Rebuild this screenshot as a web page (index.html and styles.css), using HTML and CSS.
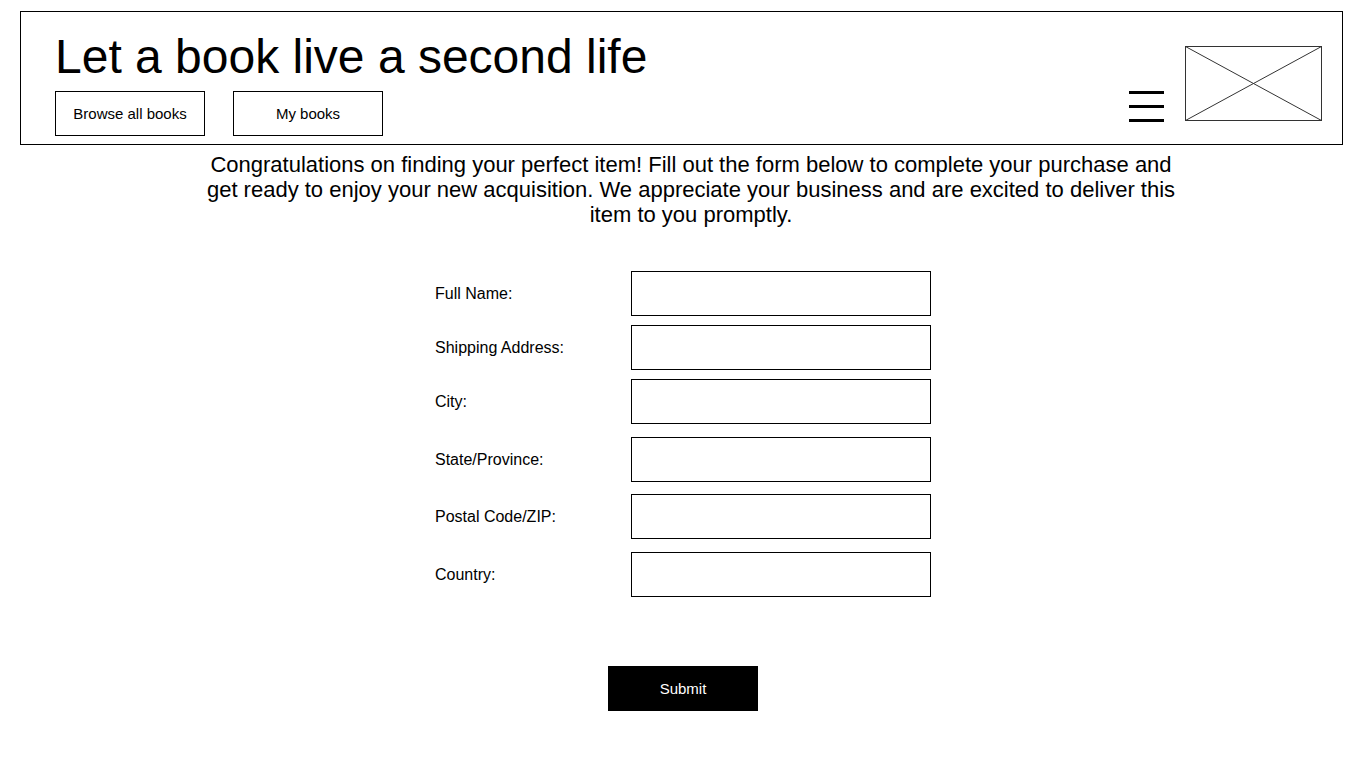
FILE: index.html
```html
<!DOCTYPE html>
<html lang="en">
<head>
<meta charset="utf-8">
<title>Let a book live a second life</title>
<link rel="stylesheet" href="styles.css">
</head>
<body>
<header class="header">
  <div class="header-left">
    <h1 class="title">Let a book live a second life</h1>
    <nav class="nav">
      <a class="nav-btn" href="#">Browse all books</a>
      <a class="nav-btn" href="#">My books</a>
    </nav>
  </div>
  <div class="header-right">
    <div class="hamburger"><span></span><span></span><span></span></div>
    <svg class="placeholder" width="137" height="75" viewBox="0 0 137 75">
      <rect x="0.5" y="0.5" width="136" height="74" fill="#fff" stroke="#333" stroke-width="1"/>
      <line x1="0.5" y1="0.5" x2="136.5" y2="74.5" stroke="#333" stroke-width="1"/>
      <line x1="136.5" y1="0.5" x2="0.5" y2="74.5" stroke="#333" stroke-width="1"/>
    </svg>
  </div>
</header>

<p class="intro">Congratulations on finding your perfect item! Fill out the form below to complete your purchase and get ready to enjoy your new acquisition. We appreciate your business and are excited to deliver this item to you promptly.</p>

<form class="form">
  <div class="row"><label class="label" for="f1">Full Name:</label><input class="field" id="f1" type="text"></div>
  <div class="row r2"><label class="label" for="f2">Shipping Address:</label><input class="field" id="f2" type="text"></div>
  <div class="row r3"><label class="label" for="f3">City:</label><input class="field" id="f3" type="text"></div>
  <div class="row r4"><label class="label" for="f4">State/Province:</label><input class="field" id="f4" type="text"></div>
  <div class="row r5"><label class="label" for="f5">Postal Code/ZIP:</label><input class="field" id="f5" type="text"></div>
  <div class="row r6"><label class="label" for="f6">Country:</label><input class="field" id="f6" type="text"></div>
  <button class="submit" type="button">Submit</button>
</form>
</body>
</html>
```

FILE: styles.css
```css
* { box-sizing: border-box; }

html, body {
  margin: 0;
  padding: 0;
  background: #fff;
  color: #000;
  font-family: "Liberation Sans", Arial, sans-serif;
}

.header {
  margin: 11px 23px 0 20px;
  height: 134px;
  border: 1px solid #000;
  display: flex;
  justify-content: space-between;
}

.header-left {
  padding: 17px 0 0 34px;
  display: flex;
  flex-direction: column;
}

.title {
  margin: 0;
  font-size: 48px;
  line-height: 55px;
  font-weight: normal;
}

.nav {
  margin-top: 7px;
  display: flex;
  gap: 28px;
}

.nav-btn {
  width: 150px;
  height: 45px;
  border: 1px solid #000;
  display: flex;
  align-items: center;
  justify-content: center;
  font-size: 15px;
  color: #000;
  text-decoration: none;
}

.header-right {
  display: flex;
  align-items: flex-end;
  gap: 21px;
  padding: 0 20px 23px 0;
}

.hamburger {
  width: 35px;
  height: 31px;
  display: flex;
  flex-direction: column;
  justify-content: space-between;
  margin-bottom: -1px;
}

.hamburger span {
  display: block;
  height: 3px;
  background: #000;
}

.placeholder { display: block; }

.intro {
  width: 980px;
  margin: 7px 0 0 201px;
  font-size: 22px;
  line-height: 25px;
  text-align: center;
}

.form {
  width: 496px;
  margin: 44px auto 0;
  display: flex;
  flex-direction: column;
}

.row {
  display: flex;
  align-items: center;
  height: 45px;
}

.r2, .r3 { margin-top: 9px; }
.r4, .r6 { margin-top: 13px; }
.r5 { margin-top: 12px; }

.label {
  width: 196px;
  font-size: 16px;
}

.field {
  width: 300px;
  height: 45px;
  border: 1px solid #000;
  border-radius: 0;
  margin: 0;
  padding: 0 8px;
  font: 16px "Liberation Sans", Arial, sans-serif;
  background: #fff;
}

.submit {
  align-self: center;
  margin-top: 69px;
  width: 150px;
  height: 45px;
  border: none;
  border-radius: 0;
  background: #000;
  color: #fff;
  font: 15px "Liberation Sans", Arial, sans-serif;
  cursor: pointer;
}
```
